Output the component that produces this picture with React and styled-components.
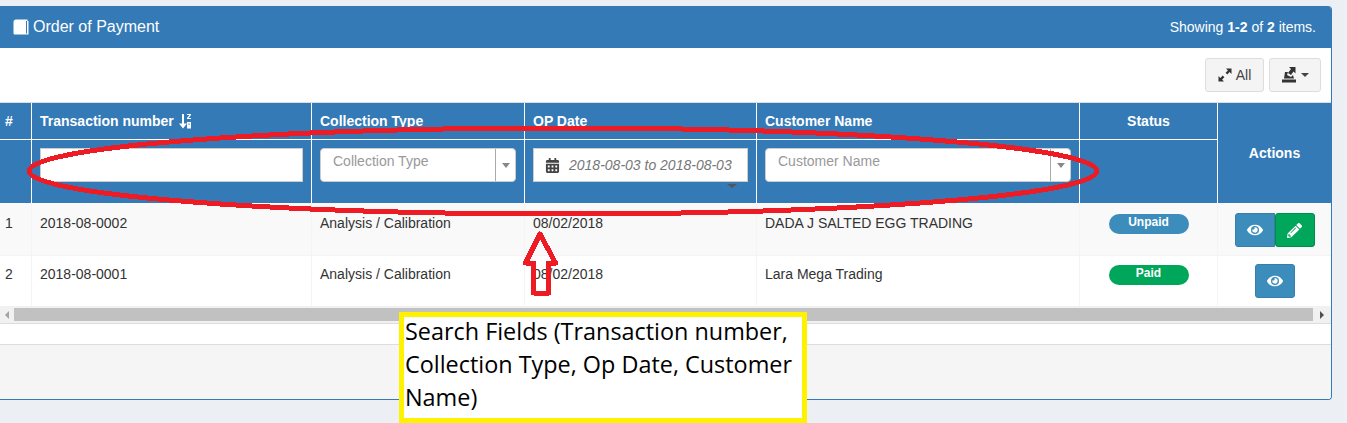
import React from 'react';
import styled, { createGlobalStyle } from 'styled-components';
import { FaEye, FaPencilAlt, FaCalendarAlt } from 'react-icons/fa';

const GlobalStyle = createGlobalStyle`
  html, body {
    margin: 0;
    overflow: hidden;
    background: #ecf0f5;
    font-family: "Liberation Sans", Arial, sans-serif;
    font-size: 14px;
    color: #333;
  }
  * { box-sizing: border-box; }
`;

const BookIcon = () => (
  <svg width="16" height="16" viewBox="0 0 16 16">
    <path d="M3 0.5 H14.5 V2 H15.5 V15.5 H2 C1 15.5 0.5 15 0.5 14 V3 C0.5 1.5 1.5 0.5 3 0.5 Z" fill="#fff" />
    <path d="M13.5 2 V14.5" stroke="#337ab7" strokeWidth="1" />
  </svg>
);

const SortIcon = () => (
  <svg width="13" height="16" viewBox="0 0 13 16" fill="#fff">
    <path d="M3 1 H5 V10.5 H8 L4 15.5 L0 10.5 H3 Z" />
    <path d="M8 1 H12 V2 L9.6 5 H12 V6 H8 V5 L10.4 2 H8 Z" />
    <path fillRule="evenodd" d="M8 9 H12 V15.5 H8 Z M9.4 10.4 V11.8 H10.6 V10.4 Z" />
  </svg>
);

const ExpandIcon = () => (
  <svg width="14" height="14" viewBox="0 0 14 14" fill="#333">
    <path d="M8 0.5 H13.5 V6 L11.6 4.1 L9.3 6.4 L7.6 4.7 L9.9 2.4 Z" />
    <path d="M6 13.5 H0.5 V8 L2.4 9.9 L4.7 7.6 L6.4 9.3 L4.1 11.6 Z" />
  </svg>
);

const ExportIcon = () => (
  <svg width="14" height="16" viewBox="0 0 14 16" fill="#333">
    <path d="M0 12.5 H14 V15.5 H0 Z" />
    <path d="M2 11.5 L3 5 H6 L5 8 L9 10 L11 8 L12 11.5 Z" />
    <path d="M7 0 H13.5 V6.5 L11.5 4.5 L9 8 L6 6 L9 2 Z" />
  </svg>
);

const Page = styled.div`
  position: relative;
  height: 423px;
  padding-top: 6px;
  overflow: hidden;
`;

const Panel = styled.section`
  margin: 0 15px 0 -4px;
  height: 394px;
  display: flex;
  flex-direction: column;
  background: #fff;
  border: 1px solid #337ab7;
  border-top: 0;
  border-radius: 4px;
  overflow: hidden;
`;

const PanelHeading = styled.header`
  height: 42px;
  flex: none;
  display: flex;
  align-items: center;
  justify-content: space-between;
  padding: 0 15px 0 16px;
  background: #337ab7;
  color: #fff;
`;

const PanelTitle = styled.h3`
  margin: 0;
  display: flex;
  align-items: center;
  gap: 4px;
  font-size: 16px;
  font-weight: 400;
`;

const Summary = styled.div`
  font-size: 14px;
  b { font-weight: 700; }
`;

const Toolbar = styled.div`
  height: 55px;
  flex: none;
  display: flex;
  justify-content: flex-end;
  align-items: flex-start;
  gap: 5px;
  padding: 10px 10px 0 0;
  border-bottom: 1px solid #ddd;
`;

const ToolButton = styled.button`
  height: 34px;
  width: ${p => p.$width}px;
  display: flex;
  align-items: center;
  justify-content: center;
  gap: 4px;
  padding: 0;
  background: #f4f4f4;
  border: 1px solid #ddd;
  border-radius: 3px;
  color: #444;
  font: inherit;
`;

const SmallCaret = styled.span`
  width: 0;
  height: 0;
  margin-left: 1px;
  border-left: 4px solid transparent;
  border-right: 4px solid transparent;
  border-top: 4px solid #444;
`;

const Grid = styled.table`
  width: 1334px;
  flex: none;
  table-layout: fixed;
  border-collapse: separate;
  border-spacing: 0;
`;

const HeadCell = styled.th`
  height: ${p => p.$height}px;
  padding: ${p => (p.$filter ? '8px' : '0 8px')};
  background: #337ab7;
  color: #fff;
  font-size: 14px;
  font-weight: 700;
  text-align: ${p => (p.$center ? 'center' : 'left')};
  vertical-align: ${p => (p.$filter ? 'top' : 'middle')};
  border-right: ${p => (p.$last ? '0' : '1px solid #fff')};
  border-bottom: ${p => (p.$line ? '1px solid #fff' : '0')};
`;

const HeadLabel = styled.span`
  display: flex;
  align-items: center;
  gap: 5px;
  svg { flex: none; }
`;

const TextFilter = styled.input`
  display: block;
  width: 263px;
  height: 34px;
  background: #fff;
  border: 1px solid #ccc;
  border-radius: 0;
  outline: 0;
`;

const SelectBox = styled.div`
  display: flex;
  height: 34px;
  background: #fff;
  border: 1px solid #ccc;
  border-radius: 4px;
`;

const SelectText = styled.span`
  flex: 1;
  padding: 2px 0 0 12px;
  color: #999;
  font-size: 14px;
  font-weight: 400;
  line-height: 20px;
`;

const SelectArrow = styled.span`
  flex: none;
  width: 20px;
  display: flex;
  align-items: center;
  justify-content: center;
  border-left: 1px solid #aaa;
  &::after {
    content: '';
    border-left: 4px solid transparent;
    border-right: 4px solid transparent;
    border-top: 5px solid #888;
  }
`;

const DateBox = styled.div`
  display: flex;
  align-items: center;
  gap: 9px;
  width: 215px;
  height: 34px;
  padding-left: 11px;
  background: #fff;
  border: 1px solid #ccc;
  color: #444;
  svg { flex: none; }
`;

const DateText = styled.span`
  color: #777;
  font-size: 14px;
  font-style: italic;
  font-weight: 400;
  white-space: nowrap;
`;

const DateCaret = styled.div`
  width: 0;
  height: 0;
  margin: 2px 0 0 194px;
  border-left: 5px solid transparent;
  border-right: 5px solid transparent;
  border-top: 4px solid #555;
`;

const Row = styled.tr`
  background: ${p => (p.$striped ? '#f9f9f9' : '#fff')};
`;

const Cell = styled.td`
  height: ${p => p.$height}px;
  padding: ${p => p.$top}px 8px 0;
  vertical-align: top;
  font-size: 14px;
  line-height: 20px;
  text-align: ${p => (p.$center ? 'center' : 'left')};
  border-right: ${p => (p.$last ? '0' : '1px solid #f4f4f4')};
  border-bottom: ${p => (p.$line ? '1px solid #f4f4f4' : '0')};
`;

const StatusPill = styled.span`
  display: block;
  width: 80px;
  height: 20px;
  margin: 2px auto 0;
  border-radius: 10px;
  background: ${p => (p.$paid ? '#00a65a' : '#3c8dbc')};
  color: #fff;
  font-size: 12px;
  font-weight: 700;
  line-height: 17px;
  text-align: center;
`;

const ActionGroup = styled.div`
  display: flex;
  justify-content: center;
`;

const ActionButton = styled.button`
  width: 40px;
  height: 34px;
  display: flex;
  align-items: center;
  justify-content: center;
  padding: 0;
  color: #fff;
  font-size: 14px;
  background: ${p => (p.$edit ? '#00a65a' : '#3c8dbc')};
  border: 1px solid ${p => (p.$edit ? '#008d4c' : '#367fa9')};
  border-radius: ${p => (p.$edit ? '3px' : p.$joined ? '3px 0 0 3px' : '3px')};
`;

const ScrollBar = styled.div`
  height: 17px;
  flex: none;
  display: flex;
  align-items: stretch;
  padding: 2px 0;
  background: #f1f1f1;
`;

const ScrollArrow = styled.span`
  flex: none;
  width: ${p => p.$width}px;
  display: flex;
  align-items: center;
  justify-content: center;
  padding-left: ${p => (p.$left ? '3px' : '0')};
  &::after {
    content: '';
    border-top: 4px solid transparent;
    border-bottom: 4px solid transparent;
    ${p => (p.$left ? 'border-right: 4px solid #a3a3a3;' : 'border-left: 4px solid #505050;')}
  }
`;

const ScrollThumb = styled.span`
  flex: 1;
  background: #c1c1c1;
`;

const PagerStrip = styled.div`
  height: 22px;
  flex: none;
  border-top: 1px solid #ddd;
  border-bottom: 1px solid #ddd;
  background: #fff;
`;

const PanelFooter = styled.footer`
  flex: 1;
  background: #f5f5f5;
`;

const Markup = styled.svg`
  position: absolute;
  top: 0;
  left: 0;
  pointer-events: none;
`;

const Callout = styled.div`
  position: absolute;
  left: 399px;
  top: 312px;
  width: 408px;
  height: 111px;
  padding: 0 0 0 1px;
  background: #fff;
  border: 5px solid #fff200;
  color: #000;
  font-family: "Open Sans", sans-serif;
  font-size: 23.4px;
  line-height: 33px;
  overflow: hidden;
`;

const CalloutText = styled.p`
  margin: -2px 0 0;
`;

const rows = [
  { no: 1, txn: '2018-08-0002', customer: 'DADA J SALTED EGG TRADING', paid: false, height: 53, top: 10, striped: true },
  { no: 2, txn: '2018-08-0001', customer: 'Lara Mega Trading', paid: true, height: 50, top: 8, striped: false },
];

const App = () => {
  return (
    <Page>
      <GlobalStyle />
      <Panel>
        <PanelHeading>
          <PanelTitle><BookIcon /> Order of Payment</PanelTitle>
          <Summary>Showing <b>1-2</b> of <b>2</b> items.</Summary>
        </PanelHeading>
        <Toolbar>
          <ToolButton $width={59}><ExpandIcon /> All</ToolButton>
          <ToolButton $width={52}><ExportIcon /><SmallCaret /></ToolButton>
        </Toolbar>
        <Grid>
          <colgroup>
            <col width="35" />
            <col width="280" />
            <col width="213" />
            <col width="232" />
            <col width="323" />
            <col width="138" />
            <col width="113" />
          </colgroup>
          <thead>
            <tr>
              <HeadCell $height={37} $line>#</HeadCell>
              <HeadCell $height={37} $line>
                <HeadLabel>Transaction number <SortIcon /></HeadLabel>
              </HeadCell>
              <HeadCell $height={37} $line>Collection Type</HeadCell>
              <HeadCell $height={37} $line>OP Date</HeadCell>
              <HeadCell $height={37} $line>Customer Name</HeadCell>
              <HeadCell $height={37} $line $center>Status</HeadCell>
              <HeadCell rowSpan={2} $center $last>Actions</HeadCell>
            </tr>
            <tr>
              <HeadCell $height={63} $filter />
              <HeadCell $height={63} $filter><TextFilter /></HeadCell>
              <HeadCell $height={63} $filter>
                <SelectBox><SelectText>Collection Type</SelectText><SelectArrow /></SelectBox>
              </HeadCell>
              <HeadCell $height={63} $filter>
                <DateBox>
                  <FaCalendarAlt size={15} />
                  <DateText>2018-08-03 to 2018-08-03</DateText>
                </DateBox>
                <DateCaret />
              </HeadCell>
              <HeadCell $height={63} $filter>
                <SelectBox><SelectText>Customer Name</SelectText><SelectArrow /></SelectBox>
              </HeadCell>
              <HeadCell $height={63} $filter />
            </tr>
          </thead>
          <tbody>
            {rows.map(r => (
              <Row key={r.no} $striped={r.striped}>
                <Cell $height={r.height} $top={r.top} $line={r.striped}>{r.no}</Cell>
                <Cell $height={r.height} $top={r.top} $line={r.striped}>{r.txn}</Cell>
                <Cell $height={r.height} $top={r.top} $line={r.striped}>Analysis / Calibration</Cell>
                <Cell $height={r.height} $top={r.top} $line={r.striped}>08/02/2018</Cell>
                <Cell $height={r.height} $top={r.top} $line={r.striped}>{r.customer}</Cell>
                <Cell $height={r.height} $top={r.top - 1} $line={r.striped} $center>
                  <StatusPill $paid={r.paid}>{r.paid ? 'Paid' : 'Unpaid'}</StatusPill>
                </Cell>
                <Cell $height={r.height} $top={r.top} $line={r.striped} $last>
                  <ActionGroup>
                    <ActionButton $joined={!r.paid}><FaEye size={16} /></ActionButton>
                    {!r.paid && <ActionButton $edit><FaPencilAlt size={15} /></ActionButton>}
                  </ActionGroup>
                </Cell>
              </Row>
            ))}
          </tbody>
        </Grid>
        <ScrollBar>
          <ScrollArrow $left $width={17} />
          <ScrollThumb />
          <ScrollArrow $width={18} />
        </ScrollBar>
        <PagerStrip />
        <PanelFooter />
      </Panel>
      <Markup width="1347" height="423" viewBox="0 0 1347 423" shapeRendering="crispEdges">
        <ellipse cx="563" cy="171" rx="534" ry="43" fill="none" stroke="#ed1c24" strokeWidth="5" />
        <path
          d="M540 234 L555.5 263 H548.5 V293 H533.5 V263 H525.5 Z"
          fill="none"
          stroke="#ed1c24"
          strokeWidth="5"
          strokeLinejoin="round"
        />
      </Markup>
      <Callout>
        <CalloutText>Search Fields (Transaction number, Collection Type, Op Date, Customer Name)</CalloutText>
      </Callout>
    </Page>
  );
};

export default App;
